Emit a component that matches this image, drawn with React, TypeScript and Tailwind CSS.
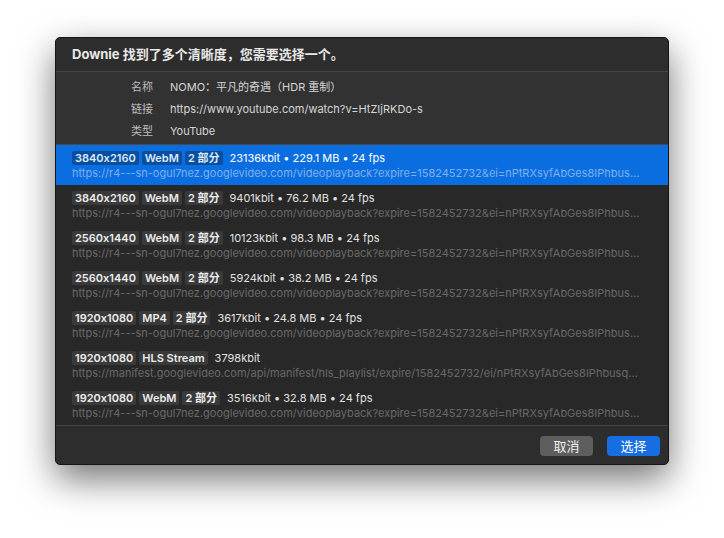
const url1 =
  "https://r4---sn-ogul7nez.googlevideo.com/videoplayback?expire=1582452732&ei=nPtRXsyfAbGes8IPhbusqAQ&ip=1.2.3.4&id=o-AKm";
const url2 =
  "https://manifest.googlevideo.com/api/manifest/hls_playlist/expire/1582452732/ei/nPtRXsyfAbGes8IPhbusqAQ/ip/1.2.3.4";

type Format = {
  res: string;
  kind: string;
  parts?: boolean;
  stats: string;
  url: string;
};

const formats: Format[] = [
  { res: "3840x2160", kind: "WebM", parts: true, stats: "23136kbit • 229.1 MB • 24 fps", url: url1 },
  { res: "3840x2160", kind: "WebM", parts: true, stats: "9401kbit • 76.2 MB • 24 fps", url: url1 },
  { res: "2560x1440", kind: "WebM", parts: true, stats: "10123kbit • 98.3 MB • 24 fps", url: url1 },
  { res: "2560x1440", kind: "WebM", parts: true, stats: "5924kbit • 38.2 MB • 24 fps", url: url1 },
  { res: "1920x1080", kind: "MP4", parts: true, stats: "3617kbit • 24.8 MB • 24 fps", url: url1 },
  { res: "1920x1080", kind: "HLS Stream", stats: "3798kbit", url: url2 },
  { res: "1920x1080", kind: "WebM", parts: true, stats: "3516kbit • 32.8 MB • 24 fps", url: url1 },
];

const Badge = ({ text, active }: { text: string; active: boolean }) => (
  <span
    className={
      active
        ? "h-[14px] px-[3px] rounded-[2px] bg-[#0a4f9e] text-[#dce9fa] font-semibold text-[11px] leading-[14px]"
        : "h-[14px] px-[3px] rounded-[2px] bg-[#3a3a3a] text-[#ececec] font-semibold text-[11px] leading-[14px]"
    }
  >
    {text}
  </span>
);

const Row = ({ f, active }: { f: Format; active: boolean }) => (
  <div className={active ? "h-[40px] pt-[6px] px-[16px] bg-[#0b6ee0]" : "h-[40px] pt-[6px] px-[16px]"}>
    <div className="flex items-center gap-[3px] h-[14px]">
      <Badge text={f.res} active={active} />
      <Badge text={f.kind} active={active} />
      {f.parts && <Badge text="2 部分" active={active} />}
      <span className={active ? "ml-[4px] text-[11px] text-white" : "ml-[4px] text-[11px] text-[#e2e2e2]"}>
        {f.stats}
      </span>
    </div>
    <div
      className={
        active
          ? "mt-[1px] pr-[12px] text-[11px] leading-[14px] truncate text-[#7eb0ee]"
          : "mt-[1px] pr-[12px] text-[11px] leading-[14px] truncate text-[#686868]"
      }
    >
      {f.url}
    </div>
  </div>
);

export default function App() {
  return (
    <div className="min-h-[538px] bg-white pl-[55px] pt-[37px] font-[Inter,'Noto_Sans_CJK_SC',sans-serif] [font-feature-settings:'calt'_0]">
      <div className="w-[614px] h-[428px] flex flex-col rounded-[5px] border border-[#151515] bg-[#2b2b2b] overflow-hidden shadow-[0_14px_36px_rgba(0,0,0,0.55)]">
        {/* title */}
        <div className="h-[34px] flex items-center px-[16px] bg-[#2d2d2d] border-b border-[#464646]">
          <span className="text-[13px] font-bold text-[#e8e8e8]">Downie 找到了多个清晰度，您需要选择一个。</span>
        </div>

        {/* info */}
        <div className="h-[73px] pt-[4px] bg-[#323232] border-b border-[#4a4a4a] text-[11px]">
          {[
            ["名称", "NOMO：平凡的奇遇（HDR 重制）"],
            ["链接", "https://www.youtube.com/watch?v=HtZIjRKDo-s"],
            ["类型", "YouTube"],
          ].map(([k, v]) => (
            <div key={k} className="h-[22px] flex items-center">
              <span className="w-[97px] text-right text-[#bdbdbd]">{k}</span>
              <span className="ml-[17px] text-[#d6d6d6]">{v}</span>
            </div>
          ))}
        </div>

        {/* list */}
        <div className="h-[280px] bg-[#282828]">
          {formats.map((f, i) => (
            <Row key={i} f={f} active={i === 0} />
          ))}
        </div>

        {/* footer */}
        <div className="flex-1 flex justify-end items-start pt-[10px] pr-[8px] gap-[14px] bg-[#2d2d2d] border-t border-[#454545]">
          <button className="w-[53px] h-[20px] rounded-[4px] bg-[#5e5e5e] text-[13px] leading-[20px] text-[#f0f0f0]">
            取消
          </button>
          <button className="w-[53px] h-[20px] rounded-[4px] bg-[#176ee0] text-[13px] leading-[20px] text-white">
            选择
          </button>
        </div>
      </div>
    </div>
  );
}
